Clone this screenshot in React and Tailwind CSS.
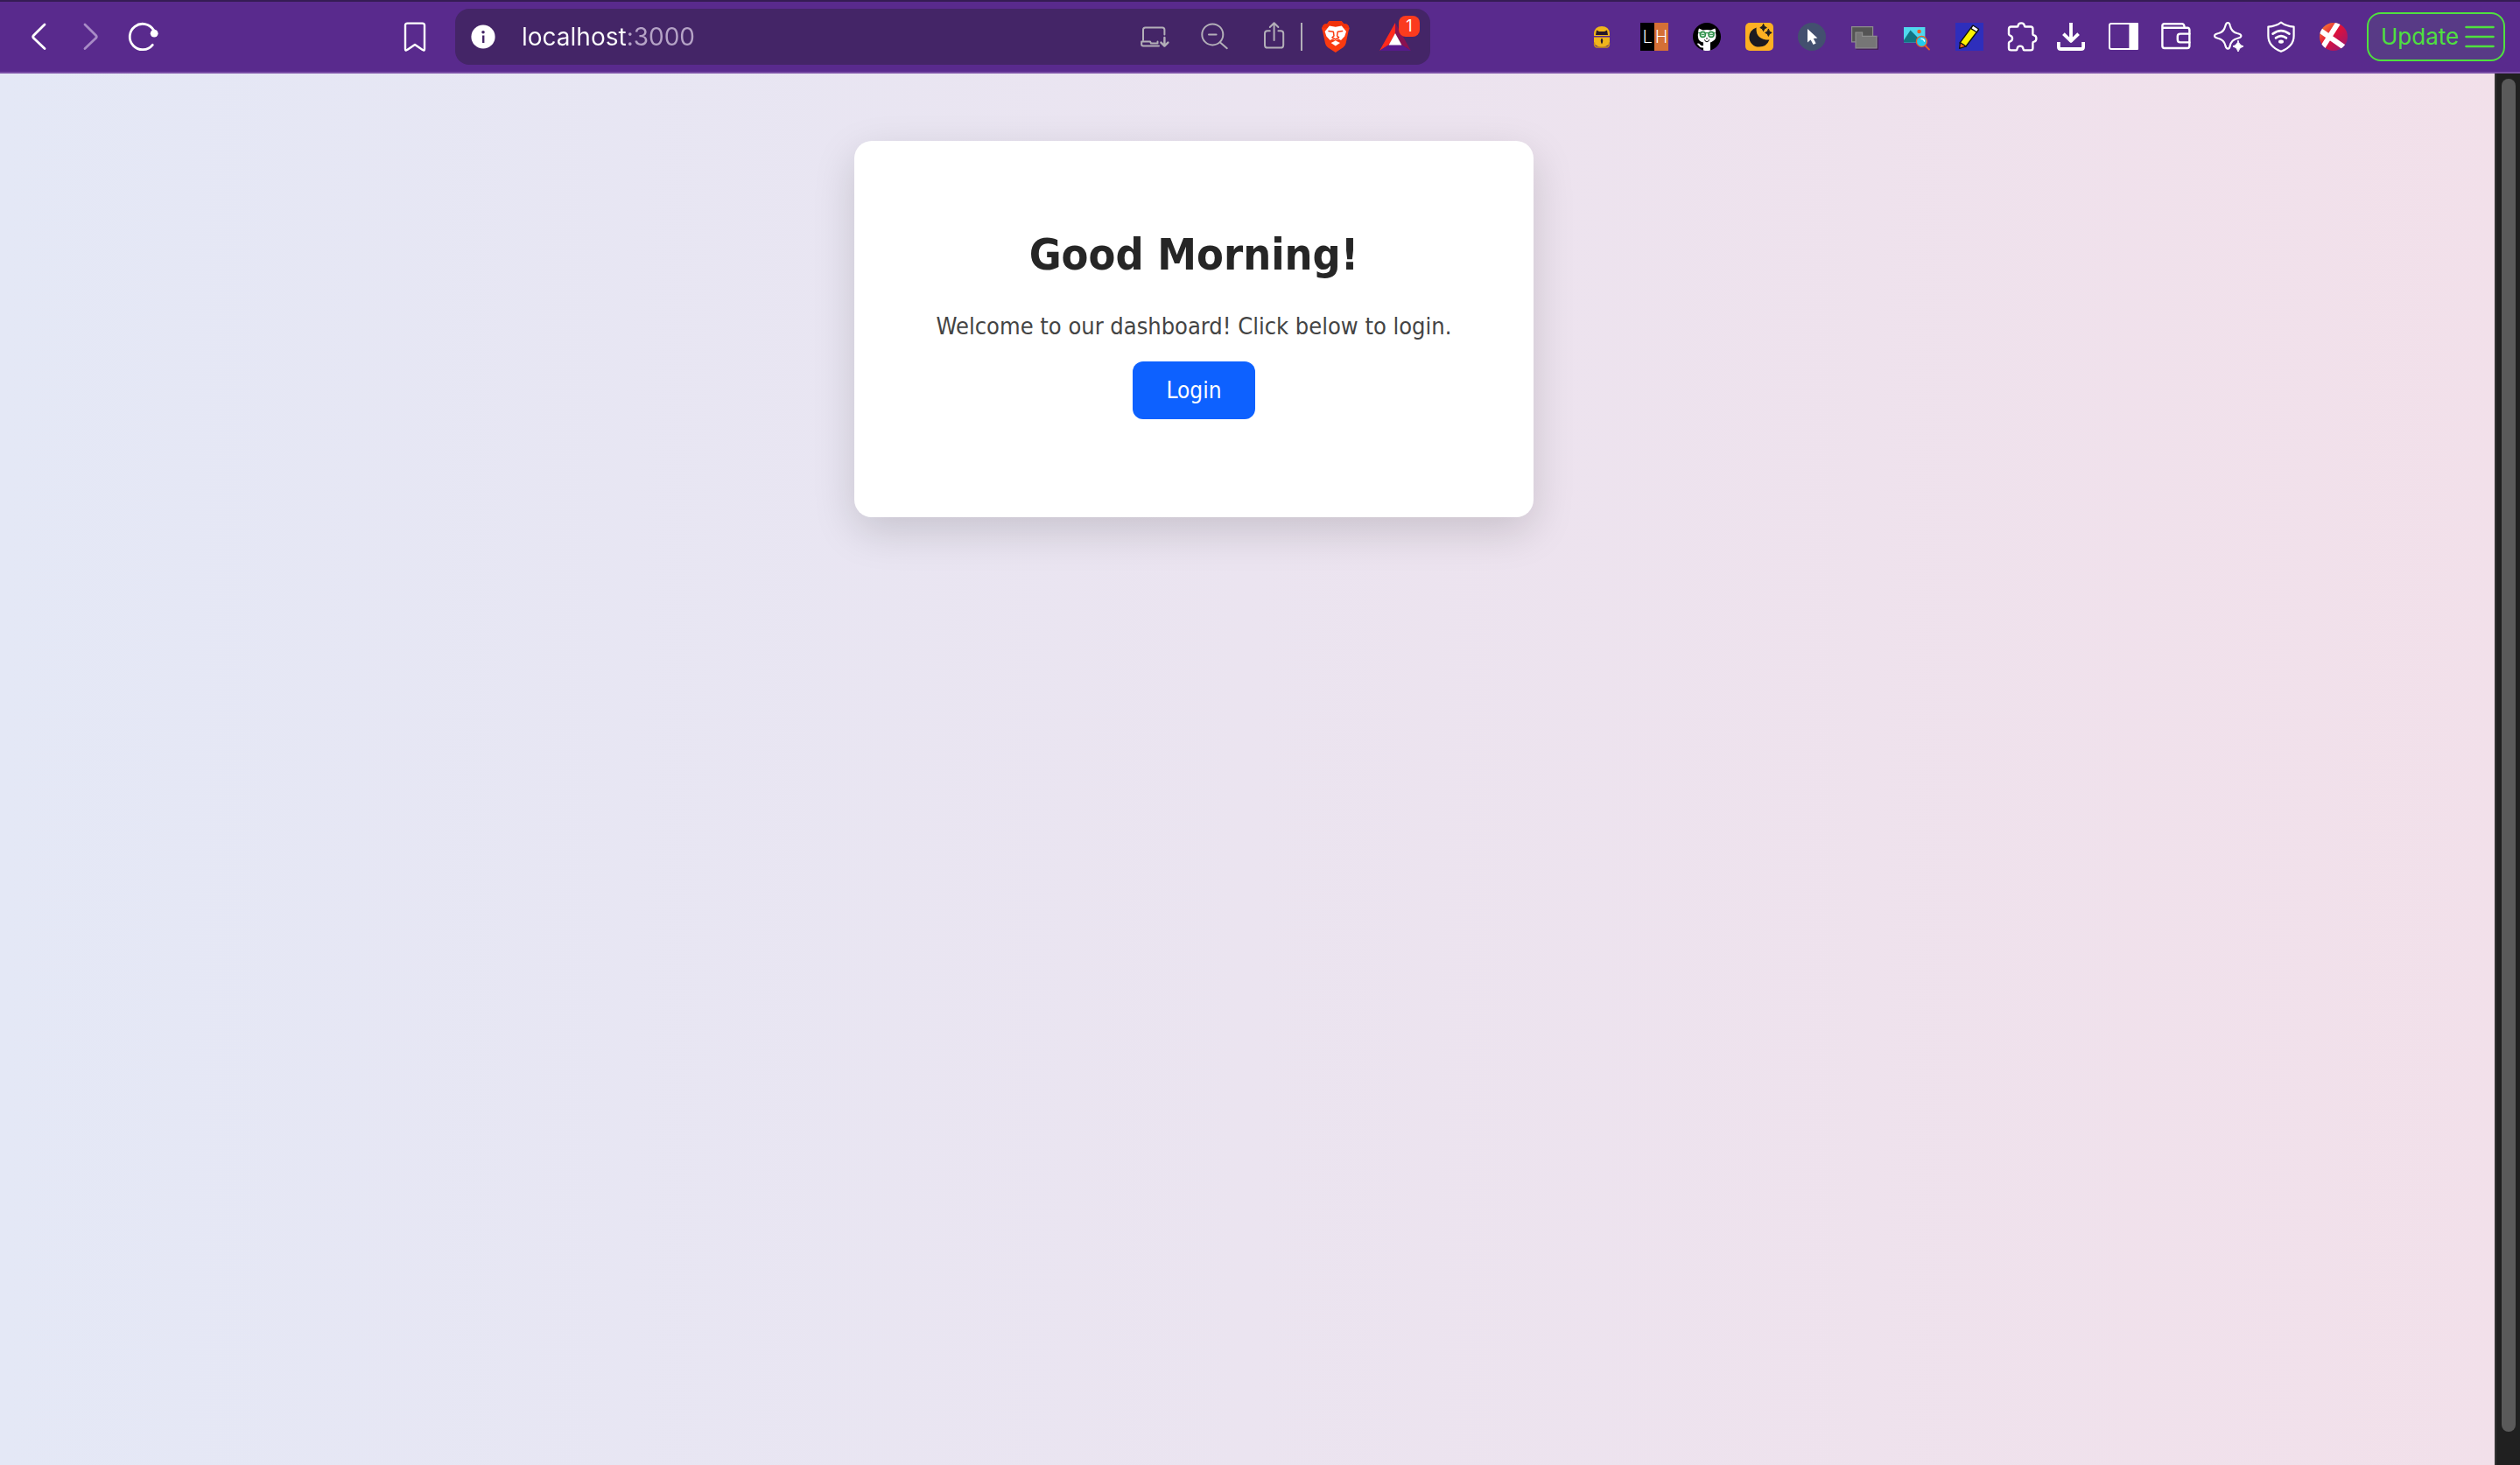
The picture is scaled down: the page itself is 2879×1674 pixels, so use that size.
const N = (p) => (
  <svg viewBox="0 0 36 36" fill="none" stroke="white" strokeWidth="2" strokeLinecap="round" strokeLinejoin="round" aria-hidden="true" className="size-9 shrink-0" {...p} />
);

const BackIcon = () => (
  <N strokeWidth="2.8"><path d="M25 4 L12.4 16.4 Q11 18 12.4 19.6 L25 31.5" /></N>
);
const ForwardIcon = () => (
  <N strokeWidth="2.8" stroke="#a88bc6"><path d="M11 4 L23.6 16.4 Q25 18 23.6 19.6 L11 31.5" /></N>
);
const ReloadIcon = () => (
  <N strokeWidth="2.8"><path d="M28.3 27.3 A14.7 14.7 0 1 1 29.6 10.5" /><circle cx="30.2" cy="14.2" r="4.4" fill="white" stroke="none" /></N>
);
const BookmarkIcon = () => (
  <N strokeWidth="2.4"><path d="M9.5 2.6 H26.5 Q29 2.6 29 5.1 V32 Q29 34.6 26.8 32.9 L18 27 L9.2 32.9 Q7 34.6 7 32 V5.1 Q7 2.6 9.5 2.6 Z" /></N>
);
const InfoIcon = () => (
  <N stroke="none" className="size-7 shrink-0" viewBox="0 0 28 28"><circle cx="14" cy="14" r="13.6" fill="white" /><circle cx="14" cy="8.8" r="1.8" fill="#442567" /><path d="M13 12.5 h2.4 v8.5 h-2.4 z" fill="#442567" /></N>
);
const InstallIcon = () => (
  <N stroke="#b3afb8" strokeWidth="2"><path d="M4 22 V10 Q4 7.5 6.5 7.5 H26 Q28.4 7.5 28.4 10 V15.5" /><path d="M22 28.5 H4 Q2.2 28.5 2.2 26.8 V23.6 H12 L13 25.4 H20.5 V23.6" /><path d="M28.4 19 V28.3 M24.4 24.6 L28.4 28.6 L32.4 24.6" strokeWidth="2.4" /></N>
);
const ZoomOutIcon = () => (
  <N stroke="#b3afb8"><circle cx="15.3" cy="15.4" r="12" /><path d="M11 15.4 H19.6 M24 24.4 L31.8 31.2" /></N>
);
const ShareIcon = () => (
  <N stroke="#b3afb8"><path d="M12.8 11.3 H10 Q7 11.3 7 14.3 V27.4 Q7 30.6 10.2 30.6 H25 Q28.2 30.6 28.2 27.4 V14.3 Q28.2 11.3 25.2 11.3 H22.4" /><path d="M17.6 22 V2.4 M12.8 7 L17.6 2.2 L22.4 7" /></N>
);
const BraveIcon = () => (
  <N stroke="none">
    <path d="M10.5 0 H24.5 L27.5 3.4 Q30.6 2.8 32.4 5.2 L33.6 8.4 L32.6 11.6 L29.6 25.4 Q29 28.2 26.4 30.2 L17.8 36 L9 30.2 Q6.6 28.2 6 25.4 L3 11.6 L2 8.4 L3.4 5.2 Q5 2.8 8 3.4 Z" fill="#fb3a10" />
    <path d="M10.5 0 H24.5 L27.5 3.4 Q30.6 2.8 32.4 5.2 L33.6 8.4 L17.8 7 L2 8.4 L3.4 5.2 Q5 2.8 8 3.4 Z" fill="#f0310a" />
    <path d="M10.8 5.6 L17.8 6.8 L24.8 5.6 L30 12 L28.2 17.4 L24 22 L21.4 20.4 L17.8 22.6 L14.2 20.4 L11.6 22 L7.4 17.4 L5.6 12 Z" fill="white" />
    <path d="M17.8 22.4 L23 25 L17.8 28.6 L12.6 25 Z" fill="white" />
    <path d="M10 11.4 L15.2 12.2 M25.6 11.4 L20.4 12.2 M15.4 12.4 L16 17 L14 18.8 L17.8 21 L21.6 18.8 L19.6 17 L20.2 12.4" stroke="#fb3a10" strokeWidth="1.5" />
  </N>
);
const BatIcon = () => (
  <N stroke="none">
    <path d="M18 2 L0 34 L11 27 L18 14 Z" fill="#ff2a1c" />
    <path d="M18 2 L36 34 L25 27 L18 14 Z" fill="#8b1150" />
    <path d="M0 34 H36 L25 27 H11 Z" fill="#571a8b" />
    <path d="M18 14 L25.4 27.4 H10.6 Z" fill="white" />
  </N>
);
const LockBotIcon = () => (
  <N stroke="none">
    <path d="M9 17 V14 Q10 6 18 6 Q26 6 27 14 V17 Z" fill="#f0b51b" />
    <path d="M12 10.4 L15 12 H21 L24 10.4 L25 16 H11 Z" fill="#27192a" />
    <path d="M9 18.4 H27 V26 Q22 30 18 30 Q14 30 9 26 Z" fill="#f0b51b" />
    <path d="M18 19.5 Q20.5 22 18 26.5 Q15.5 22 18 19.5 Z" fill="#27192a" />
    <path d="M9.6 25 Q9 29 12 30 H24 Q27 29 26.4 25" stroke="#c98e1b" strokeWidth="1.4" />
  </N>
);
const LhIcon = () => (
  <span aria-hidden="true" className="flex h-8 w-8 shrink-0 font-['Roboto',sans-serif] text-xl leading-8 font-light text-white">
    <span className="w-4 bg-black text-center">L</span>
    <span className="w-4 bg-[#d56f35] text-center">H</span>
  </span>
);
const OctocatIcon = () => (
  <N viewBox="0 0 32 32" className="size-8 shrink-0" stroke="none">
    <circle cx="16" cy="16" r="16" fill="black" />
    <path d="M7 6.5 L11.5 8.4 Q16 7.4 20.5 8.4 L25.4 6.5 Q26.5 9.6 26 11.4 Q27.5 18 23.6 20.6 Q21.6 22 20 22.4 V31.4 Q16 32.6 12 31.4 V28.4 Q8.6 29 7 26.6 Q6 24.6 4.6 24 Q6.6 22.8 8.4 25 Q10 27 12 26 V22.4 Q6.4 21.4 6 16.4 Q5.4 13 6.4 11.4 Q5.8 9.6 7 6.5 Z" fill="white" />
    <path d="M7 11.6 H25" stroke="#2f8f4a" strokeWidth="1.4" />
    <circle cx="11.4" cy="13.4" r="3" fill="#d9f2df" stroke="#2f8f4a" strokeWidth="1.6" /><circle cx="21" cy="13.4" r="3" fill="#d9f2df" stroke="#2f8f4a" strokeWidth="1.6" />
    <path d="M10 13.4 h3 M19.6 13.4 h3" stroke="#2f8f4a" strokeWidth="1" />
    <path d="M13.6 19.6 Q14 21.8 16 21.8 Q18 21.8 18.6 19.6 M16 17.4 v1" stroke="black" strokeWidth="1" />
  </N>
);
const MoonIcon = () => (
  <N viewBox="0 0 32 32" className="size-8 shrink-0" stroke="none">
    <rect width="32" height="32" rx="5" fill="#fdb022" />
    <path d="M12.6 5.4 Q11.4 19.4 27.4 19.6 Q24.4 27.6 15.8 27.6 A11.2 11.2 0 0 1 4.4 16.4 Q4.6 8.4 12.6 5.4 Z" fill="#1c1b20" />
    <path d="M20.6 1.6 Q21 5 24.4 5.6 Q21 6.2 20.6 9.6 Q20 6.2 16.8 5.6 Q20 5 20.6 1.6 Z M26.4 7.4 Q26.8 10.8 30.2 11.4 Q26.8 12 26.4 15.4 Q25.8 12 22.6 11.4 Q25.8 10.8 26.4 7.4 Z" fill="#1c1b20" stroke="#1c1b20" strokeWidth="1" />
  </N>
);
const CursorIcon = () => (
  <N viewBox="0 0 32 32" className="size-8 shrink-0" stroke="none">
    <circle cx="16" cy="16" r="16" fill="#43506f" />
    <path d="M11 7 V22.6 L14.6 19.4 L17.6 25 L20.6 23.4 L17.8 18 L22.4 17.6 Z" fill="white" />
  </N>
);
const FoldersIcon = () => (
  <N viewBox="0 0 32 32" className="size-8 shrink-0" strokeLinejoin="miter" stroke="#8d8d8d" strokeWidth="1.2">
    <path d="M1.6 4.6 H25.6 V21.8 H1.6 Z" fill="#545454" />
    <path d="M7 30 H31.4 V17" stroke="#40204f" strokeWidth="1.4" />
    <path d="M6 11 H13.6 V15.4 H30 V28.8 H6 Z" fill="#767676" />
  </N>
);
const PictureSearchIcon = () => (
  <N viewBox="0 0 32 32" className="size-8 shrink-0" stroke="none">
    <path d="M1 5 H25.4 V22.6 H1 Z" fill="#50d8ee" />
    <path d="M1 20 L8.6 8.6 L18 18 V22.6 H1 Z" fill="#127482" />
    <circle cx="18.6" cy="10" r="2.3" fill="#f45a1c" />
    <path d="M25.4 26 L30 30.6" stroke="#f45a1c" strokeWidth="1.8" />
    <circle cx="21.4" cy="21.4" r="6" fill="#22ccee" stroke="#f45a1c" strokeWidth="1.3" />
    <path d="M21 18.4 Q24 18.4 24.6 21" stroke="white" strokeWidth="1.4" />
  </N>
);
const PencilIcon = () => (
  <N viewBox="0 0 32 32" className="size-8 shrink-0" stroke="#111" strokeWidth="1.3">
    <path d="M0 0 H32 V32 H0 Z" fill="#2e2ebc" stroke="none" />
    <path d="M19.4 3.6 L26.4 8 L12 27 L5 23 Z" fill="#fff200" />
    <path d="M5.4 22.6 L12 27 L4.6 29.4 Z" fill="#f26522" />
    <path d="M17.8 6.6 L20 3 L26.6 7.2 L24.4 10.8 Z" fill="white" />
  </N>
);
const PuzzleIcon = () => (
  <N strokeWidth="2.4"><path d="M5.6 6.5 H12.4 Q13.6 6.5 13.6 5.2 Q14 2.4 17.2 2.4 Q20.4 2.4 20.8 5.2 Q20.8 6.5 22 6.5 H28 Q30.4 6.5 30.4 8.9 V15 Q30.4 16.2 31.8 16.4 Q34.4 17 34.4 20 Q34.4 23 31.8 23.6 Q30.4 23.8 30.4 25 V31 Q30.4 33.4 28 33.4 H20.6 Q19.6 33.4 19.4 31.6 Q19 28.6 16 28.6 Q13 28.6 12.6 31.6 Q12.4 33.4 11.4 33.4 H5.6 Q3 33.4 3 31 V25 Q3 24 4.6 23.4 Q7 22.6 7 20 Q7 17.4 4.6 16.6 Q3 16 3 15 V8.9 Q3 6.5 5.6 6.5 Z" /></N>
);
const DownloadIcon = () => (
  <N viewBox="0 0 32 32" className="size-8 shrink-0" strokeWidth="3.8" strokeLinecap="butt"><path d="M16 0 V22 M7.4 12.6 L16 21 L24.6 12.6 M1.9 22 V27.4 Q1.9 30 4.5 30 H27.5 Q30.1 30 30.1 27.4 V22" /></N>
);
const PanelIcon = () => (
  <N strokeWidth="2"><rect x="2" y="3" width="32" height="29" rx="2" /><path d="M25.4 3 H34 V32 H25.4 Z" fill="white" /></N>
);
const WalletIcon = () => (
  <N strokeWidth="2.4"><path d="M27.6 7.5 Q27.6 3.2 25 3.2 H4.8 Q2.4 3.2 2.4 5.6 V28.6 Q2.4 31 4.8 31 H31 Q33.4 31 33.4 28.6 V10.2 Q33.4 7.8 31 7.8 H3" /><path d="M33.4 14.6 H22.8 Q19.8 14.6 19.8 17.6 V21 Q19.8 24.4 22.8 24.4 H33.4" /></N>
);
const SparkleIcon = () => (
  <N strokeWidth="2.2"><path d="M17.2 2 Q19.2 2 19.8 5.4 Q21.4 12.4 27.8 14 Q32.4 15 32.4 17 Q32.4 19 27.8 20 Q21.4 21.6 19.8 28 Q19.2 31.6 17.2 31.6 Q15.2 31.6 14.4 28 Q12.8 21.6 6.6 20 Q2 19 2 17 Q2 15 6.6 14 Q12.8 12.4 14.4 5.4 Q15.2 2 17.2 2 Z" /><circle cx="29" cy="29" r="7.4" fill="#592a8d" stroke="none" /><path d="M29 22.6 Q30 27.6 35 28.9 Q30 30 29 35 Q28 30 23 28.9 Q28 27.6 29 22.6 Z" fill="white" strokeWidth="1" /></N>
);
const ShieldIcon = () => (
  <N strokeWidth="2.2"><path d="M18 1.6 Q24 6 32.6 6.6 V17 Q32.6 29 18 34.8 Q3.4 29 3.4 17 V6.6 Q12 6 18 1.6 Z" /><path d="M8.6 14.6 Q18 7.6 27.4 14.6 M12 19.4 Q18 14.8 24 19.4" strokeWidth="2.6" /><ellipse cx="18" cy="23.6" rx="3" ry="2.2" fill="white" stroke="none" /></N>
);
const ProfileIcon = () => (
  <N viewBox="0 0 32 32" className="size-8 shrink-0" stroke="none">
    <defs>
      <linearGradient id="profile" x1="0" y1="0" x2="1" y2="1"><stop offset="0" stopColor="#ff9a2e" /><stop offset=".45" stopColor="#e0103a" /><stop offset="1" stopColor="#8d1a78" /></linearGradient>
      <clipPath id="disc"><circle cx="16" cy="16" r="16" /></clipPath>
    </defs>
    <circle cx="16" cy="16" r="16" fill="url(#profile)" />
    <g clipPath="url(#disc)" stroke="white" strokeWidth="6" strokeLinecap="butt"><path d="M22 -1 L3 29 M1 9 L28 28" /></g>
  </N>
);

const extensions = [
  ["Password helper", LockBotIcon], ["LH", LhIcon], ["Octocat", OctocatIcon], ["Dark mode", MoonIcon],
  ["Cursor", CursorIcon], ["Folders", FoldersIcon], ["Image search", PictureSearchIcon], ["Pencil", PencilIcon],
  ["Extensions", PuzzleIcon],
];
const tools = [
  ["Downloads", DownloadIcon], ["Side panel", PanelIcon], ["Wallet", WalletIcon], ["Assistant", SparkleIcon],
  ["VPN", ShieldIcon], ["Profile", ProfileIcon],
];

function IconButton({ label, icon: Icon }) {
  return (
    <button type="button" aria-label={label} className="grid size-9 shrink-0 place-items-center">
      <Icon />
    </button>
  );
}

function Toolbar() {
  return (
    <header className="flex h-21 items-center border-t-2 border-b-2 border-t-[#351c54] border-b-[#7a4fa6] bg-[#592a8d] pr-[17px] pl-[26px] font-['Inter',sans-serif]">
      <nav aria-label="History" className="flex items-center gap-6">
        <IconButton label="Back" icon={BackIcon} />
        <IconButton label="Forward" icon={ForwardIcon} />
        <IconButton label="Reload" icon={ReloadIcon} />
      </nav>
      <div className="ml-auto flex items-center">
        <IconButton label="Bookmark" icon={BookmarkIcon} />
      </div>
      <div className="mr-[178px] ml-7 flex h-16 w-[1114px] items-center rounded-2xl bg-[#442567] pr-[22px] pl-[18px]">
        <InfoIcon />
        <input
          type="text"
          aria-label="Address"
          defaultValue="localhost:3000"
          className="ml-[30px] min-w-0 flex-1 bg-[linear-gradient(to_right,white_120px,#b5a3c6_120px)] bg-clip-text text-[28px] leading-9 text-transparent caret-white outline-none"
        />
        <div className="flex items-center gap-8">
          <IconButton label="Install" icon={InstallIcon} />
          <IconButton label="Zoom out" icon={ZoomOutIcon} />
          <IconButton label="Share" icon={ShareIcon} />
        </div>
        <div className="mr-5 ml-3 h-8 w-0.5 bg-[#b3afb8]" />
        <IconButton label="Shields" icon={BraveIcon} />
        <button type="button" aria-label="Rewards" className="relative ml-8 size-9">
          <BatIcon />
          <span className="absolute -top-1.5 left-[22px] grid size-6 place-items-center rounded-lg bg-[#fb3b1e] text-lg leading-6 text-white">1</span>
        </button>
      </div>
      <div className="flex items-center gap-6">
        {extensions.map(([label, icon]) => <IconButton key={label} label={label} icon={icon} />)}
      </div>
      <div className="ml-5 flex items-center gap-6">
        {tools.map(([label, icon]) => <IconButton key={label} label={label} icon={icon} />)}
      </div>
      <button type="button" className="ml-5 flex h-14 w-[158px] shrink-0 items-center justify-between rounded-2xl border-2 border-[#4fe03f] bg-[#583a86] pr-2.5 pl-3.5 text-[26px] leading-8 text-[#4fe03f]">
        Update
        <svg viewBox="0 0 34 26" className="h-[26px] w-[34px]" stroke="#4fe03f" strokeWidth="2.6" strokeLinecap="round" aria-hidden="true"><path d="M1.5 2 H32.5 M1.5 13 H32.5 M1.5 24 H32.5" /></svg>
      </button>
    </header>
  );
}

export default function App() {
  return (
    <div className="flex h-screen flex-col">
      <Toolbar />
      <div className="flex min-h-0 flex-1">
        <main className="flex flex-1 items-start justify-center bg-[linear-gradient(to_right,#e4e8f6,#f2e0ea)] pt-[77px] pr-[122px] font-['DejaVu_Sans_Condensed','Noto_Sans',sans-serif]">
          <section className="flex w-[776px] flex-col items-center rounded-[20px] bg-white px-10 pt-[98px] pb-28 text-center shadow-[0_16px_48px_rgba(0,0,0,0.15)]">
            <h1 className="text-[50px] leading-16 font-bold text-[#262626]">Good Morning!</h1>
            <p className="mt-[30px] text-[27px] leading-10 text-[#444]">Welcome to our dashboard! Click below to login.</p>
            <button type="button" className="mt-5 rounded-xl bg-[#0d61ff] px-[38px] py-[17px] text-[26px] leading-8 text-white">Login</button>
          </section>
        </main>
        <div className="flex w-[29px] justify-center border-l-2 border-[#333] bg-[#202020] pt-1.5 pb-[38px]">
          <div className="w-4 rounded-full bg-[#5a5a5a]" />
        </div>
      </div>
    </div>
  );
}
